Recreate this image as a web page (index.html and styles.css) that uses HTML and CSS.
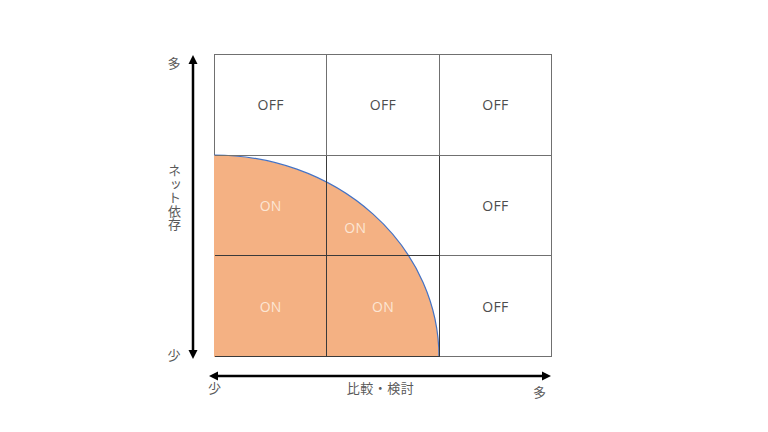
FILE: index.html
```html
<!DOCTYPE html>
<html lang="ja">
<head>
<meta charset="utf-8">
<link rel="stylesheet" href="styles.css">
</head>
<body>
<div class="figure">
  <div class="y-labels">
    <span class="lbl">多</span>
    <span class="lbl y-title">ネット依存</span>
    <span class="lbl">少</span>
  </div>
  <div class="y-arrow">
    <svg width="10" height="304" viewBox="0 0 10 304">
      <line x1="5" y1="7" x2="5" y2="297" stroke="#000" stroke-width="2.5"/>
      <polygon points="5,0 9.5,9 0.5,9" fill="#000"/>
      <polygon points="5,304 9.5,295 0.5,295" fill="#000"/>
    </svg>
  </div>
  <div class="chart">
    <svg class="zone" width="338" height="303" viewBox="0 0 338 303">
      <path d="M0,303 L0,101 A225,202 0 0 1 225,303 Z" fill="#F4B183"/>
      <path d="M0,101 A225,202 0 0 1 225,303" fill="none" stroke="#4472C4" stroke-width="1.2"/>
    </svg>
    <div class="cell">OFF</div>
    <div class="cell">OFF</div>
    <div class="cell">OFF</div>
    <div class="cell on">ON</div>
    <div class="cell on cell--low">ON</div>
    <div class="cell">OFF</div>
    <div class="cell on">ON</div>
    <div class="cell on">ON</div>
    <div class="cell">OFF</div>
  </div>
  <div class="x-axis">
    <svg class="x-arrow" width="342" height="10" viewBox="0 0 342 10">
      <line x1="7" y1="5" x2="335" y2="5" stroke="#000" stroke-width="2.5"/>
      <polygon points="0,5 9,0.5 9,9.5" fill="#000"/>
      <polygon points="342,5 333,0.5 333,9.5" fill="#000"/>
    </svg>
    <div class="x-labels">
      <span class="lbl">少</span>
      <span class="lbl x-title">比較・検討</span>
      <span class="lbl x-end">多</span>
    </div>
  </div>
</div>
</body>
</html>
```
FILE: styles.css
```css
html, body {
  margin: 0;
  padding: 0;
  background: #fff;
}
body {
  width: 768px;
  height: 432px;
  overflow: hidden;
  font-family: "Open Sans", "Noto Sans CJK JP", sans-serif;
}
.figure {
  display: grid;
  grid-template-columns: 28px 26px 338px;
  grid-template-rows: 303px auto;
  padding: 54px 0 0 160px;
}
.lbl {
  font-family: "Noto Sans CJK JP", sans-serif;
  font-size: 13px;
  line-height: 14px;
  color: #5a5a5a;
}
.y-labels {
  display: flex;
  flex-direction: column;
  align-items: center;
  justify-content: space-between;
  margin-top: 2px;
  margin-bottom: -5px;
}
.y-title {
  writing-mode: vertical-rl;
  text-orientation: upright;
  letter-spacing: 0.5px;
  margin-bottom: 22px;
}
.y-arrow {
  display: flex;
  align-items: flex-start;
  padding-top: 1px;
}
.chart {
  position: relative;
  display: grid;
  grid-template-columns: repeat(3, 1fr);
  grid-template-rows: repeat(3, 1fr);
  border-top: 1px solid #707070;
  border-left: 1px solid #707070;
  box-sizing: border-box;
  width: 338px;
  height: 303px;
}
.zone {
  position: absolute;
  left: -1px;
  top: -1px;
}
.cell {
  position: relative;
  display: flex;
  align-items: center;
  justify-content: center;
  border-right: 1px solid #707070;
  border-bottom: 1px solid #707070;
  font-size: 14px;
  color: #4d4d4d;
  letter-spacing: 0.3px;
}
.cell.on {
  color: #FCE6D4;
  border-color: #3a3a3a;
}
.cell--low {
  align-items: flex-start;
  justify-content: flex-start;
  padding: 62px 0 0 17px;
}
.x-axis {
  grid-column: 3;
  margin-left: -5px;
  width: 342px;
}
.x-arrow {
  display: block;
  margin-top: 14px;
}
.x-labels {
  display: grid;
  grid-template-columns: 14px 1fr 14px;
  margin-left: -1px;
  margin-right: 4px;
}
.x-title {
  text-align: center;
  padding-left: 6px;
  letter-spacing: 0.5px;
}
.x-end {
  margin-top: 4px;
}
```
